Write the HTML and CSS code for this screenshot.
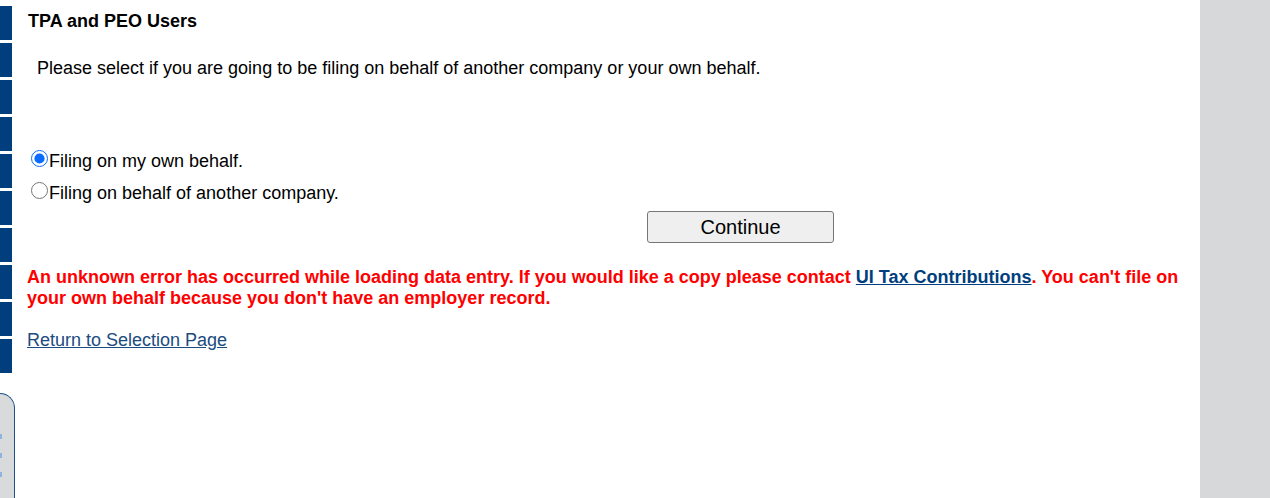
FILE: index.html
```html
<!DOCTYPE html>
<html lang="en">
<head>
  <meta charset="UTF-8">
  <title>TPA and PEO Users</title>
  <link rel="stylesheet" href="styles.css">
</head>
<body>
  <div class="page">
    <div class="sidebar">
      <div class="nav-tabs">
        <span class="nav-tab"></span>
        <span class="nav-tab"></span>
        <span class="nav-tab"></span>
        <span class="nav-tab"></span>
        <span class="nav-tab"></span>
        <span class="nav-tab"></span>
        <span class="nav-tab"></span>
        <span class="nav-tab"></span>
        <span class="nav-tab"></span>
        <span class="nav-tab"></span>
      </div>
      <div class="side-box">
        <span class="dot"></span>
        <span class="dot"></span>
        <span class="dot"></span>
      </div>
    </div>

    <div class="content">
      <h2 class="title">TPA and PEO Users</h2>
      <p class="intro">Please select if you are going to be filing on behalf of another company or your own behalf.</p>

      <form class="filing-form">
        <label class="choice"><input type="radio" name="filing" value="own" checked>Filing on my own behalf.</label>
        <label class="choice"><input type="radio" name="filing" value="other">Filing on behalf of another company.</label>
        <div class="actions">
          <button type="button">Continue</button>
        </div>
      </form>

      <p class="error">An unknown error has occurred while loading data entry. If you would like a copy please contact <a href="#">UI Tax Contributions</a>. You can't file on your own behalf because you don't have an employer record.</p>

      <a class="back-link" href="#">Return to Selection Page</a>
    </div>

    <div class="gutter"></div>
  </div>
</body>
</html>
```

FILE: styles.css
```css
body {
  margin: 0;
  font-family: "Liberation Sans", Arial, sans-serif;
  font-size: 18px;
  color: #000;
  background-color: #fff;
}

.page {
  display: flex;
  height: 498px;
  overflow: hidden;
}

.sidebar {
  width: 15px;
  display: flex;
  flex-direction: column;
}

.nav-tabs {
  display: flex;
  flex-direction: column;
  gap: 3px;
  padding-top: 6px;
}

.nav-tab {
  display: block;
  width: 12px;
  height: 34px;
  background-color: #003e7e;
}

.side-box {
  margin-top: 20px;
  margin-left: -6px;
  width: 21px;
  flex: 1;
  background-color: #d9dadc;
  border: 1px solid #1d4f8c;
  border-bottom: none;
  border-radius: 0 15px 0 0;
  display: flex;
  flex-direction: column;
  gap: 14px;
  padding-top: 40px;
  padding-left: 5px;
  box-sizing: border-box;
}

.dot {
  width: 2px;
  height: 5px;
  background-color: #8fb3dc;
}

.content {
  flex: 1;
  padding-left: 12px;
  padding-right: 8px;
}

.title {
  font-size: 18px;
  font-weight: bold;
  line-height: 21px;
  margin: 11px 0 0;
  padding-left: 1px;
}

.intro {
  line-height: 21px;
  margin: 26px 0 0;
  padding-left: 10px;
}

.filing-form {
  margin-top: 66px;
}

.choice {
  display: flex;
  align-items: center;
  height: 32px;
  line-height: 32px;
  margin-left: 4px;
}

.choice input {
  width: 17px;
  height: 17px;
  margin: -6px 1px 0 0;
  accent-color: #0a6cff;
}

.actions {
  padding-left: 620px;
  margin-top: 2px;
}

.actions button {
  width: 187px;
  height: 32px;
  font-family: "Liberation Sans", Arial, sans-serif;
  font-size: 20px;
  background-color: #efefef;
  border: 1px solid #767676;
  border-radius: 3px;
  color: #000;
}

.error {
  margin: 24px 0 0;
  color: #ff0000;
  font-weight: bold;
  line-height: 21px;
  font-size: 18px;
}

.error a {
  color: #003e7e;
}

.back-link {
  display: inline-block;
  margin-top: 21px;
  line-height: 21px;
  color: #1c4b80;
}

.gutter {
  width: 70px;
  background-color: #d7d8da;
}
```
